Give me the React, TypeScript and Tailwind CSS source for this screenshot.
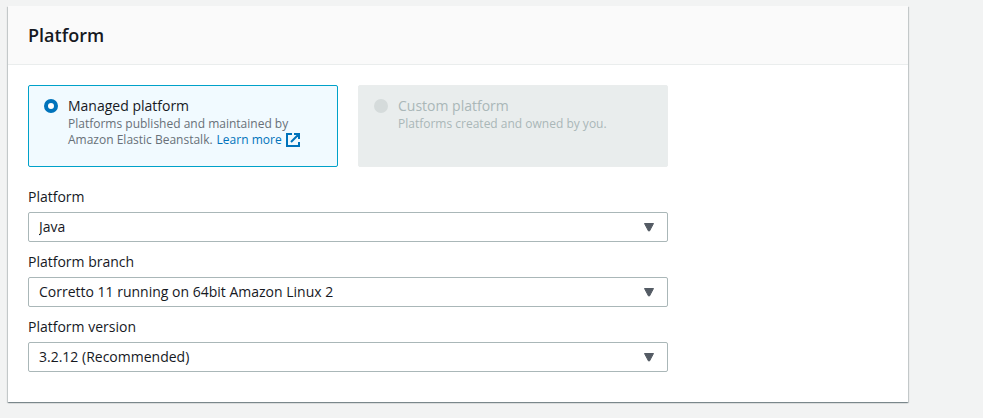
import { useState } from "react";

function ExternalIcon() {
  return (
    <svg viewBox="0 0 14 14" className="size-3.5 shrink-0" fill="none" stroke="currentColor" strokeWidth="2" aria-hidden="true">
      <path d="M6 1H1v12h12V9M8 1h5v5M13 1L5 9" />
    </svg>
  );
}

function SelectField({ id, label, value }: { id: string; label: string; value: string }) {
  return (
    <div className="flex flex-col gap-1">
      <label htmlFor={id} className="text-sm leading-[22px]">{label}</label>
      <div className="relative">
        <select id={id} className="block h-[30px] w-full appearance-none rounded-xs border border-[#aab7b8] bg-white px-2.5 text-sm">
          <option>{value}</option>
        </select>
        <svg viewBox="0 0 12 9" className="pointer-events-none absolute top-[11px] right-[13px] h-[9px] w-3" aria-hidden="true">
          <path d="M1.5 .5h9L6.5 8h-1z" fill="#545b64" stroke="#545b64" strokeLinejoin="round" />
        </svg>
      </div>
    </div>
  );
}

export default function App() {
  const [kind, setKind] = useState("managed");
  return (
    <main className="min-h-screen bg-[#f2f3f3] pt-1.5 pr-[75px] pb-4 pl-2 font-['Open_Sans','Noto_Sans',sans-serif] text-[#16191f]">
      <section className="bg-white shadow-[0_1px_1px_0_rgba(0,28,36,0.3),1px_1px_1px_0_rgba(0,28,36,0.15),-1px_1px_1px_0_rgba(0,28,36,0.15)]">
        <header className="border-b border-[#eaeded] bg-[#fafafa] px-5 py-[18px]">
          <h2 className="text-lg leading-[22px] font-semibold">Platform</h2>
        </header>
        <div className="px-5 pt-5 pb-[30px]">
          <div className="max-w-[640px]">
            <div className="mb-[19px] grid grid-cols-2 gap-5">
              <label className="flex min-h-[82px] gap-2.5 rounded-xs border border-[#00a1c9] bg-[#f1faff] px-[15px] pt-2.5">
                <input type="radio" name="kind" checked={kind === "managed"} onChange={() => setKind("managed")} className="mt-[3px] size-3.5 shrink-0 appearance-none rounded-full border-4 border-[#0073bb] bg-white" />
                <span>
                  <span className="block text-sm leading-5">Managed platform</span>
                  <span className="block text-xs leading-4 text-[#687078]">Platforms published and maintained by</span>
                  <span className="flex flex-wrap gap-x-1 text-xs leading-4 text-[#687078]">
                    <span>Amazon Elastic Beanstalk.</span>
                    <a href="#learn" className="flex h-4 items-center gap-1 text-[#0073bb]">Learn more<ExternalIcon /></a>
                  </span>
                </span>
              </label>
              <label className="flex min-h-[82px] gap-2.5 rounded-xs border border-[#eaeded] bg-[#e9eded] px-[15px] pt-2.5 text-[#aab7b8]">
                <input type="radio" name="kind" disabled className="mt-[3px] size-3.5 shrink-0 appearance-none rounded-full bg-[#d5dbdb]" />
                <span>
                  <span className="block text-sm leading-5">Custom platform</span>
                  <span className="block text-xs leading-4">Platforms created and owned by you.</span>
                </span>
              </label>
            </div>
            <div className="flex flex-col gap-[9px]">
              <SelectField id="platform" label="Platform" value="Java" />
              <SelectField id="branch" label="Platform branch" value="Corretto 11 running on 64bit Amazon Linux 2" />
              <SelectField id="version" label="Platform version" value="3.2.12 (Recommended)" />
            </div>
          </div>
        </div>
      </section>
    </main>
  );
}
